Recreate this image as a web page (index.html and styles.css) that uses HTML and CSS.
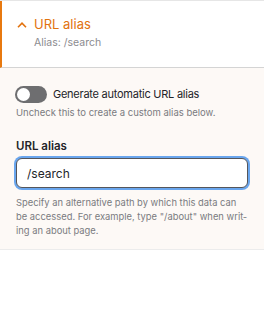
FILE: index.html
```html
<!DOCTYPE html>
<html lang="en">

<head>
  <meta charset="UTF-8">
  <meta name="viewport" content="width=device-width, initial-scale=1.0">
  <title>URL alias</title>
  <link rel="stylesheet" href="styles.css">
</head>

<body>
  <div class="details">
    <div class="summary">
      <svg class="chevron" width="10" height="6" viewBox="0 0 10 6">
        <path d="M1 5.2 L5 1.2 L9 5.2" fill="none" stroke="#e2720e" stroke-width="1.6" />
      </svg>
      <div class="summary-text">
        <div class="summary-title">URL alias</div>
        <div class="summary-desc">Alias: /search</div>
      </div>
    </div>

    <div class="details-body">
      <div class="toggle-row">
        <span class="toggle"><span class="toggle-knob"></span></span>
        <span class="toggle-label">Generate automatic URL alias</span>
      </div>
      <div class="help">Uncheck this to create a custom alias below.</div>

      <div class="field">
        <label class="field-label" for="alias">URL alias</label>
        <input class="field-input" id="alias" type="text" value="/search">
        <div class="help help-field">Specify an alternative path by which this data can be accessed. For example, type "/about" when writ&shy;ing an about page.</div>
      </div>
    </div>
  </div>
</body>

</html>
```

FILE: styles.css
```css
* {
  margin: 0;
  padding: 0;
  box-sizing: border-box;
}

body {
  font-family: Inter, 'Noto Sans', sans-serif;
  background: white;
  color: #232429;
}

.details {
  border-top: 1px solid #e6e6e6;
  border-bottom: 1px solid #ececec;
}

.summary {
  display: flex;
  align-items: flex-start;
  gap: 7px;
  height: 67px;
  padding: 14px 14px 0 15px;
  border-left: 2px solid #e8790f;
  border-bottom: 1px solid #d4d4d4;
  background: white;
}

.chevron {
  margin-top: 7px;
}

.summary-title {
  font-size: 13px;
  line-height: 18px;
  color: #e2720e;
}

.summary-desc {
  font-size: 10.5px;
  line-height: 14px;
  margin-top: 3px;
  color: #8b8b8f;
}

.details-body {
  background: #fdf9f6;
  padding: 18px 16px 11px 16px;
}

.toggle-row {
  display: flex;
  align-items: center;
  gap: 6px;
  margin-left: -1px;
}

.toggle {
  display: inline-flex;
  align-items: center;
  width: 32px;
  height: 17px;
  border-radius: 9px;
  background: #6e6e70;
  padding: 0 2px;
}

.toggle-knob {
  width: 13px;
  height: 13px;
  border-radius: 50%;
  background: white;
}

.toggle-label {
  font-size: 11px;
  letter-spacing: -0.25px;
  line-height: 17px;
}

.help {
  font-size: 9.5px;
  line-height: 14px;
  color: #7a7b80;
  margin-top: 3px;
}

.field {
  margin-top: 18px;
}

.field-label {
  display: block;
  font-size: 11.5px;
  font-weight: 600;
  line-height: 16px;
  margin-bottom: 4px;
}

.field-input {
  display: block;
  width: 232px;
  height: 30px;
  padding: 0 10px;
  font-family: inherit;
  font-size: 12px;
  color: #232429;
  background: white;
  border: 1px solid #55565b;
  border-radius: 6px;
  box-shadow: 0 0 0 2px #6aa6ee;
  outline: none;
}

.help-field {
  margin-top: 8px;
  font-size: 9.4px;
  hyphens: manual;
}
```
